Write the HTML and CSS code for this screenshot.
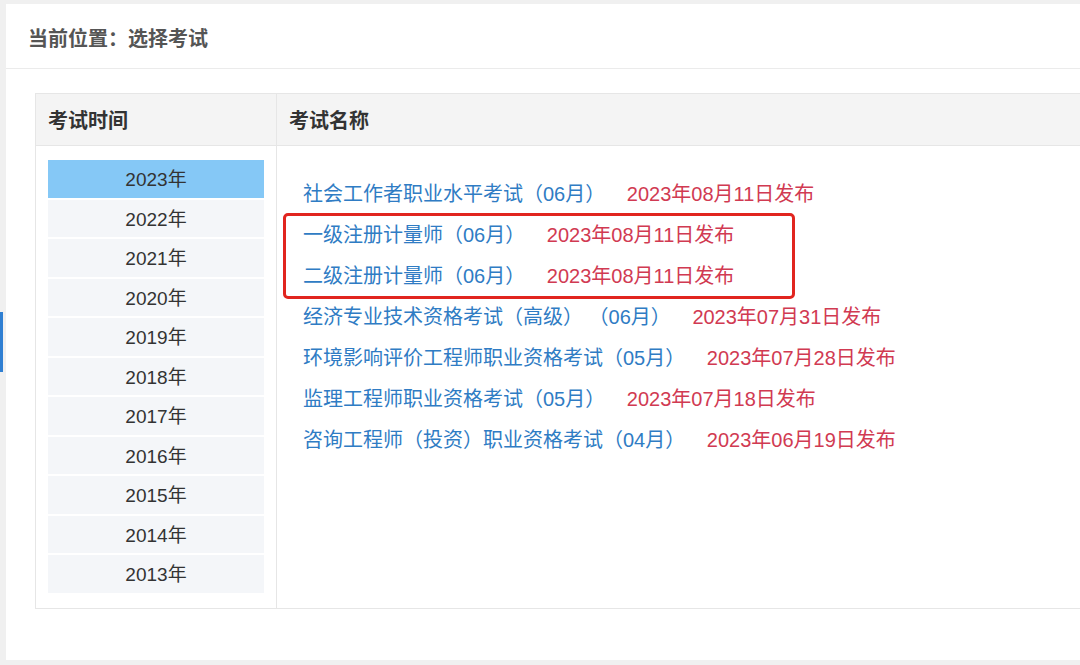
FILE: index.html
```html
<!DOCTYPE html>
<html lang="zh-CN">
  <head>
    <meta charset="UTF-8" />
    <meta name="viewport" content="width=device-width, initial-scale=1.0" />
    <title>选择考试</title>
    <link rel="stylesheet" href="styles.css">
  </head>
  <body>
    <div class="side-tab"></div>
    <div class="page">
      <div class="panel">
        <div class="crumb">当前位置：选择考试</div>
        <div class="exam-table">
          <div class="head-row">
            <div class="col-year">考试时间</div>
            <div class="col-name">考试名称</div>
          </div>
          <div class="body-row">
            <ul class="year-list">
              <li class="active">2023年</li>
              <li>2022年</li>
              <li>2021年</li>
              <li>2020年</li>
              <li>2019年</li>
              <li>2018年</li>
              <li>2017年</li>
              <li>2016年</li>
              <li>2015年</li>
              <li>2014年</li>
              <li>2013年</li>
            </ul>
            <div class="exam-list">
              <div class="exam">
                <a href="#">社会工作者职业水平考试（06月）</a>
                <span class="date">2023年08月11日发布</span>
              </div>
              <div class="marked">
                <div class="exam">
                  <a href="#">一级注册计量师（06月）</a>
                  <span class="date">2023年08月11日发布</span>
                </div>
                <div class="exam">
                  <a href="#">二级注册计量师（06月）</a>
                  <span class="date">2023年08月11日发布</span>
                </div>
              </div>
              <div class="exam">
                <a href="#">经济专业技术资格考试（高级）&nbsp;（06月）</a>
                <span class="date">2023年07月31日发布</span>
              </div>
              <div class="exam">
                <a href="#">环境影响评价工程师职业资格考试（05月）</a>
                <span class="date">2023年07月28日发布</span>
              </div>
              <div class="exam">
                <a href="#">监理工程师职业资格考试（05月）</a>
                <span class="date">2023年07月18日发布</span>
              </div>
              <div class="exam">
                <a href="#">咨询工程师（投资）职业资格考试（04月）</a>
                <span class="date">2023年06月19日发布</span>
              </div>
            </div>
          </div>
        </div>
      </div>
    </div>
  </body>
</html>
```

FILE: styles.css
```css
body {
  margin: 0;
  background-color: #f0f0f0;
  font-family: "Liberation Sans", "Noto Sans CJK SC", sans-serif;
  overflow: hidden;
}

.page {
  padding: 4px 0 5px 6px;
}

.panel {
  background-color: #fff;
  height: 656px;
  overflow: hidden;
}

/* blue tab peeking in at the left edge */
.side-tab {
  position: absolute;
  left: 0;
  top: 312px;
  width: 3px;
  height: 60px;
  background-color: #2f7fd2;
}

.crumb {
  height: 64px;
  line-height: 70px;
  padding-left: 22px;
  border-bottom: 1px solid #ebebeb;
  font-size: 20px;
  font-weight: bold;
  color: #555;
}

.exam-table {
  margin: 24px 0 0 29px;
  width: 1100px;
  border: 1px solid #e6e6e6;
}

.head-row {
  display: flex;
  height: 51px;
  background-color: #f4f4f4;
  border-bottom: 1px solid #e6e6e6;
  font-size: 20px;
  font-weight: bold;
  color: #333;
  line-height: 54px;
}

.col-year {
  width: 241px;
  padding-left: 12px;
  box-sizing: border-box;
  border-right: 1px solid #e6e6e6;
}

.col-name {
  padding-left: 12px;
}

.body-row {
  display: flex;
}

.year-list {
  list-style-type: none;
  margin: 0;
  width: 241px;
  box-sizing: border-box;
  padding: 14px 12px 15px 12px;
  border-right: 1px solid #e6e6e6;
}

.year-list li {
  height: 37.5px;
  line-height: 40px;
  margin-bottom: 2px;
  background-color: #f4f6f9;
  text-align: center;
  font-size: 19px;
  color: #333;
}

.year-list li:last-child {
  margin-bottom: 0;
}

.year-list li.active {
  background-color: #85c8f6;
}

.exam-list {
  padding: 27px 0 0 26px;
}

.exam {
  height: 41px;
  line-height: 42px;
  font-size: 20px;
  white-space: nowrap;
}

.exam a {
  color: #2f7cc4;
  text-decoration: none;
}

.exam .date {
  color: #d13a52;
  margin-left: 16px;
}

.marked {
  position: relative;
}

.marked::after {
  content: "";
  position: absolute;
  left: -20px;
  top: -1px;
  width: 512px;
  height: 86px;
  box-sizing: border-box;
  border: 3px solid #e1251f;
  border-radius: 5px;
}
```
